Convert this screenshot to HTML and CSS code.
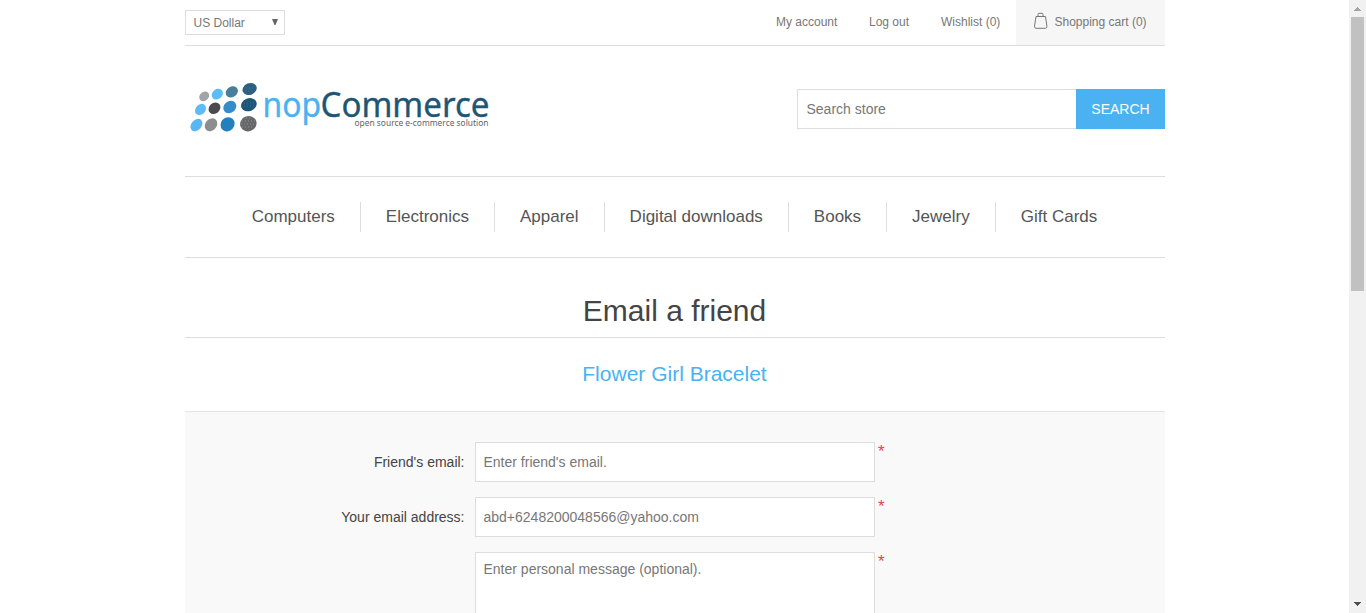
FILE: index.html
```html
<!DOCTYPE html>
<html lang="en">
<head>
<meta charset="utf-8">
<title>Email a friend</title>
<link rel="stylesheet" href="styles.css">
</head>
<body>
<div class="viewport">
  <div class="page">
    <div class="wrapper">
      <div class="topbar">
        <div class="currency"><span>US Dollar</span>
          <svg class="caret" width="6" height="6" viewBox="0 0 6 6"><path d="M0 0H6L3.5 6h-1z" fill="#666"/></svg>
        </div>
        <div class="links">
          <a class="link account">My account</a>
          <a class="link logout">Log out</a>
          <a class="link wishlist">Wishlist (0)</a>
          <a class="cart">
            <svg width="14" height="17" viewBox="0 0 14 17" fill="none" stroke="#777"><path d="M2 4.500h9.500l1.400 9.700q.1 2.100-1.400 2.100H2Q.4 16.300.5 14.200zM4 4.500V2.500Q4 1.300 5 1.300h3q1 0 1 1.200v2"/></svg>
            <span>Shopping cart (0)</span>
          </a>
        </div>
      </div>
      <header class="header">
        <svg class="logo" width="310" height="60" viewBox="185 78 310 60">
          <g>
            <ellipse cx="204.200" cy="96.300" rx="5.400" ry="4.400" transform="rotate(-42 204.200 96.300)" fill="#a1a4a8"/>
            <ellipse cx="217.300" cy="94.200" rx="6" ry="4.900" transform="rotate(-38 217.300 94.200)" fill="#5dbcf5"/>
            <ellipse cx="231.800" cy="91.900" rx="6.500" ry="5.200" transform="rotate(-32 231.800 91.900)" fill="#4a7d9c"/>
            <ellipse cx="249.600" cy="89" rx="7.300" ry="5.800" transform="rotate(-22 249.600 89)" fill="#2c5f80"/>
            <ellipse cx="200.500" cy="109.500" rx="6.200" ry="4.900" transform="rotate(-48 200.500 109.500)" fill="#5dbcf5"/>
            <ellipse cx="214.500" cy="108.300" rx="6.400" ry="5.300" transform="rotate(-42 214.500 108.300)" fill="#4b4b4f"/>
            <ellipse cx="229.800" cy="107" rx="6.900" ry="5.800" transform="rotate(-38 229.800 107)" fill="#348dca"/>
            <ellipse cx="248.900" cy="104.700" rx="8" ry="6.400" transform="rotate(-22 248.900 104.700)" fill="#1e5679"/>
            <ellipse cx="196.400" cy="125.100" rx="7" ry="5.100" transform="rotate(-48 196.400 125.100)" fill="#56b7f3"/>
            <ellipse cx="211" cy="124.800" rx="7" ry="5.700" transform="rotate(-48 211 124.800)" fill="#8c8d8f"/>
            <ellipse cx="227.600" cy="124.300" rx="7.500" ry="6.700" transform="rotate(-48 227.600 124.300)" fill="#2480bd"/>
            <ellipse cx="248.300" cy="123.700" rx="8.300" ry="7.600" transform="rotate(-20 248.300 123.700)" fill="#666769"/>
            <path d="M242 121h13M241 124h14M242 127h12M246 118h6" stroke="#a0a1a3" stroke-width=".8" stroke-dasharray="1 2"/>
            <path d="M244 103h10M244 106h10M246 88h8M245 91h8" stroke="#47799a" stroke-width=".7" stroke-dasharray="1 2"/>
          </g>
          <text class="logo-name" y="116.500"><tspan class="logo-nop" x="262.500" textLength="58.500" lengthAdjust="spacingAndGlyphs">nop</tspan><tspan class="logo-commerce" x="320.500" textLength="169" lengthAdjust="spacingAndGlyphs">Commerce</tspan></text>
          <text class="logo-tag" x="354.500" y="126" textLength="134" lengthAdjust="spacingAndGlyphs">open source e-commerce solution</text>
        </svg>
        <div class="search"><div class="search-field">Search store</div><div class="search-button">SEARCH</div></div>
      </header>
      <nav class="menu">
        <a>Computers</a><a>Electronics</a><a>Apparel</a><a>Digital downloads</a><a>Books</a><a>Jewelry</a><a>Gift Cards</a>
      </nav>
      <h1 class="title">Email a friend</h1>
      <h2 class="product">Flower Girl Bracelet</h2>
      <div class="form">
        <div class="row"><label class="label">Friend's email:</label><div class="field">Enter friend's email.</div><span class="required">*</span></div>
        <div class="row"><label class="label">Your email address:</label><div class="field">abd+6248200048566@yahoo.com</div><span class="required">*</span></div>
        <div class="row"><label class="label"></label><div class="field message">Enter personal message (optional).</div><span class="required">*</span></div>
      </div>
    </div>
  </div>
  <div class="scrollbar">
    <svg class="arrow" width="7" height="4" viewBox="0 0 7 4" shape-rendering="crispEdges"><path d="M3 0h1v1h1v1h1v1h1v1H0V3h1V2h1V1h1z" fill="#a3a3a3"/></svg>
    <div class="thumb"></div>
    <svg class="arrow down" width="7" height="4" viewBox="0 0 7 4" shape-rendering="crispEdges"><path d="M0 0h7v1H6v1H5v1H4v1H3V3H2V2H1V1H0z" fill="#505050"/></svg>
  </div>
</div>
</body>
</html>
```
FILE: styles.css
```css
* { box-sizing: border-box; }
body { margin: 0; overflow: hidden; background: #fff; color: #777; font: 14px "Liberation Sans", Arial, sans-serif; }
.viewport { display: flex; height: 613px; overflow: hidden; }
.page { flex: 1; padding-left: 184.5px; }
.wrapper { width: 980px; }
.topbar { display: flex; justify-content: space-between; height: 46px; border-bottom: 1px solid #ddd; font-size: 12px; }
.currency { display: flex; justify-content: space-between; align-items: center; width: 100px; height: 25px; margin-top: 10px; padding: 0 6px 0 8px; border: 1px solid #ddd; }
.caret { margin-bottom: 2px; }
.links { display: flex; line-height: 44px; white-space: nowrap; }
.link { padding-left: .5px; }
.account { width: 93px; }
.logout { width: 72px; }
.wishlist { width: 75px; }
.cart { display: flex; gap: 7px; width: 149px; height: 45px; padding-left: 18px; background: #f6f6f6; }
.cart svg { margin-top: 12px; }
.header { display: flex; justify-content: space-between; height: 131px; border-bottom: 1px solid #ddd; }
.logo { margin-top: 32px; overflow: visible; }
.logo-name { font: 34.5px "Noto Sans", sans-serif; stroke-width: .35px; }
.logo-nop { fill: #4ab2f1; stroke: #4ab2f1; }
.logo-commerce { fill: #205575; stroke: #205575; }
.logo-tag { font: 8.2px "Noto Sans", sans-serif; fill: #626468; }
.search { display: flex; height: 40px; margin-top: 43px; line-height: 38px; }
.search-field { width: 279px; padding-left: 9px; border: 1px solid #ddd; border-right: 0; }
.search-button { width: 89px; padding-left: 1px; line-height: 40px; text-align: center; color: #fff; background: #4ab2f1; }
.menu { display: flex; justify-content: center; align-items: center; height: 81px; border-bottom: 1px solid #ddd; color: #555; font-size: 17px; }
.menu a { height: 30px; padding: 0 25px; line-height: 29px; border-left: 1px solid #ddd; }
.menu a:first-child { border-left: 0; }
.title { height: 80px; margin: 0; padding-top: 33px; border-bottom: 1px solid #ddd; line-height: 40px; text-align: center; font-size: 30px; font-weight: normal; color: #444; }
.product { height: 73px; margin: 0; line-height: 72px; text-align: center; font-size: 21px; font-weight: normal; color: #4ab2f1; }
.form { display: flex; flex-direction: column; gap: 15px; padding-top: 30px; height: 260px; border-top: 1px solid #e4e4e4; background: #f9f9f9; }
.row { display: flex; }
.label { width: 280px; margin-right: 10px; line-height: 40px; text-align: right; color: #444; }
.field { width: 400px; height: 40px; padding-left: 8px; border: 1px solid #ddd; line-height: 38px; background: #fff; }
.message { height: 150px; padding-top: 8px; line-height: 16px; }
.required { margin-left: 3.5px; font-size: 17px; line-height: 20px; color: #e4434b; }
.scrollbar { display: flex; flex-direction: column; align-items: center; width: 17px; background: #f1f1f1; }
.arrow { margin: 7px 0 6px; }
.down { margin: auto 0 7px; }
.thumb { width: 13px; height: 274px; background: #c1c1c1; }
```
